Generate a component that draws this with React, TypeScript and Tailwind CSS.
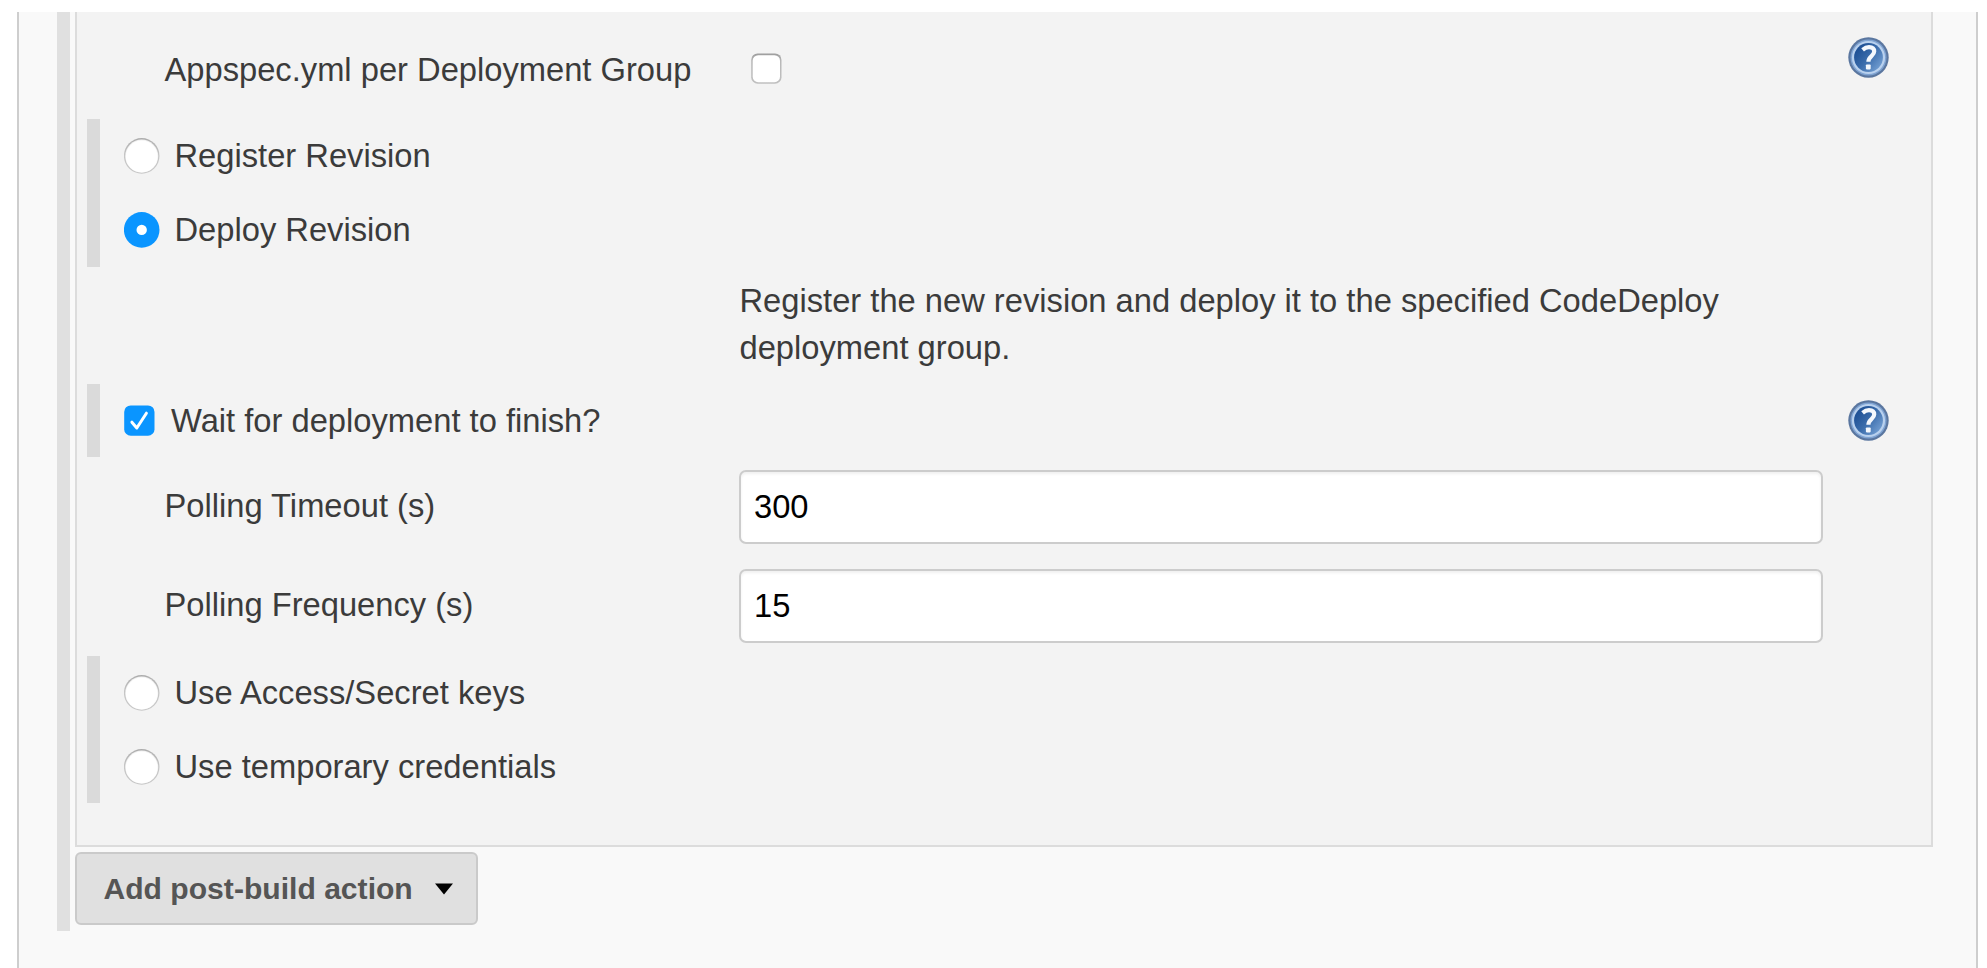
import type { ReactNode } from "react";

function HelpIcon() {
  return (
    <svg width="41" height="41" viewBox="0 0 41 41" aria-label="Help" role="img">
      <defs>
        <linearGradient id="disc" x1="0" y1="0.1" x2="1" y2="0.9">
          <stop offset="0.1" stopColor="#1d4f94" />
          <stop offset="0.5" stopColor="#3a6cab" />
          <stop offset="1" stopColor="#7ba6d8" />
        </linearGradient>
      </defs>
      <circle cx="20.5" cy="20.5" r="20.2" fill="#5a769f" />
      <circle cx="20.5" cy="20.5" r="18" fill="#7fa3d2" />
      <circle cx="20.5" cy="20.5" r="16.6" fill="#b9d1ee" />
      <circle cx="20.5" cy="20.5" r="14.4" fill="url(#disc)" />
      <path
        d="M14.6 12.8C17 10.8 19 10.2 21 10.2C24.4 10.2 26.2 12 26.2 14.6C26.2 18.8 20.4 19.4 20.4 24.8"
        fill="none"
        stroke="#f4f8fd"
        strokeWidth="4.2"
      />
      <rect x="17.9" y="27.4" width="4.8" height="5" rx="0.8" fill="#f4f8fd" />
    </svg>
  );
}

function Radio({ checked = false }: { checked?: boolean }) {
  return (
    <svg className="shrink-0" width="36" height="37" viewBox="0 0 36 37" role="radio" aria-checked={checked}>
      <defs>
        <linearGradient id="rim" x1="0" y1="0" x2="0" y2="1">
          <stop offset="0" stopColor="#acacac" />
          <stop offset="0.5" stopColor="#c6c6c6" />
          <stop offset="1" stopColor="#c8c8c8" />
        </linearGradient>
      </defs>
      <circle cx="17.7" cy="18.9" r="17.8" fill={checked ? "#0a95ff" : "url(#rim)"} />
      {checked ? (
        <circle cx="17.7" cy="18.9" r="5.2" fill="#fff" />
      ) : (
        <>
          <circle cx="17.7" cy="19.1" r="16.5" fill="#f1f1f1" />
          <circle cx="17.7" cy="19.5" r="15.9" fill="#fff" />
        </>
      )}
    </svg>
  );
}

function Checkbox({ checked = false }: { checked?: boolean }) {
  return (
    <svg className="shrink-0" width="31" height="31" viewBox="0 0 31 31" role="checkbox" aria-checked={checked}>
      <defs>
        <linearGradient id="edge" x1="0" y1="0" x2="0" y2="1">
          <stop offset="0" stopColor="#9c9c9c" />
          <stop offset="0.25" stopColor="#b8b8b8" />
          <stop offset="1" stopColor="#c0c0c0" />
        </linearGradient>
      </defs>
      <rect x="0.2" y="0.4" width="30.3" height="30.3" rx="6.5" fill={checked ? "#0a95ff" : "url(#edge)"} />
      {checked ? (
        <path
          d="M7.9 17.2L12.8 23L22.4 8.2"
          fill="none"
          stroke="#fff"
          strokeWidth="3"
          strokeLinecap="round"
          strokeLinejoin="round"
        />
      ) : (
        <rect x="1.7" y="2.2" width="27.3" height="27" rx="5.5" fill="#fff" />
      )}
    </svg>
  );
}

function Block({ children }: { children: ReactNode }) {
  return <div className="ml-[10px] border-l-[13px] border-[#dadada] pl-[23.5px]">{children}</div>;
}

function RadioRow({ label, checked }: { label: string; checked?: boolean }) {
  return (
    <label className="flex h-[73.8px] items-center gap-[15px]">
      <Radio checked={checked} />
      <span>{label}</span>
    </label>
  );
}

function FieldRow({ label, value }: { label: string; value: string }) {
  return (
    <label className="flex h-[98.7px] items-start pl-[87.5px] pt-[13px]">
      <span className="w-[574.5px] shrink-0 pt-[12px] leading-[47px]">{label}</span>
      <input
        className="h-[74px] w-[1084px] rounded-[7px] border-2 border-[#cccccc] bg-white px-[13px] pb-[1px] text-black shadow-[inset_0_2px_3px_#f0f0f0] outline-none"
        defaultValue={value}
      />
    </label>
  );
}

export default function App() {
  return (
    <div className="h-[968px] w-[1987px] overflow-hidden bg-white pl-[17px] pt-[12px] font-['Liberation_Sans',Arial,sans-serif] text-[32.7px] text-[#3b3b3b]">
      <div className="h-[956px] w-[1961px] border-x-2 border-[#cecece] bg-[#f9f9f9] pl-[38px]">
        <div className="h-[919px] border-l-[13px] border-[#e0e0e0] pl-[5px]">
          <section className="h-[835px] w-[1858px] border-2 border-t-0 border-[#dcdcdc] bg-[#f3f3f3]">
            <div className="flex h-[107px] items-start pl-[87.5px]">
              <span className="w-[586px] pt-[33.5px] leading-[47px]">Appspec.yml per Deployment Group</span>
              <span className="pt-[41px]">
                <Checkbox />
              </span>
              <span className="ml-auto mr-[42px] pt-[25px]">
                <HelpIcon />
              </span>
            </div>
            <Block>
              <RadioRow label="Register Revision" />
              <RadioRow label="Deploy Revision" checked />
            </Block>
            <p className="h-[117px] pl-[662.5px] pr-[108px] pt-[11.5px] leading-[46.8px]">
              Register the new revision and deploy it to the specified CodeDeploy deployment group.
            </p>
            <Block>
              <div className="flex h-[73.8px] items-center">
                <Checkbox checked />
                <span className="ml-[16.5px]">Wait for deployment to finish?</span>
                <span className="ml-auto mr-[42px]">
                  <HelpIcon />
                </span>
              </div>
            </Block>
            <FieldRow label="Polling Timeout (s)" value="300" />
            <FieldRow label="Polling Frequency (s)" value="15" />
            <div className="pt-[1px]">
              <Block>
                <RadioRow label="Use Access/Secret keys" />
                <RadioRow label="Use temporary credentials" />
              </Block>
            </div>
          </section>
          <button className="mt-[5px] flex h-[73px] w-[403px] items-center rounded-[6px] border-2 border-[#cacaca] bg-[#e0e0e0] pl-[26.5px] text-[30.1px] font-bold text-[#555555]">
            Add post-build action
            <svg className="ml-[21.5px] mt-[1px]" width="20" height="12" viewBox="0 0 20 12">
              <path d="M1 0.5H19L10 11.5Z" fill="#000" />
            </svg>
          </button>
        </div>
      </div>
    </div>
  );
}
